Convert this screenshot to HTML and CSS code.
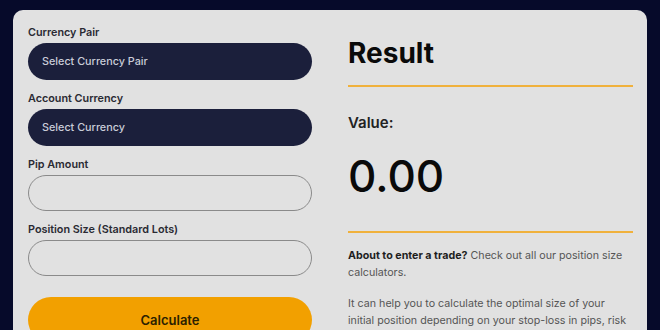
FILE: index.html
```html
<!DOCTYPE html>
<html lang="en">
<head>
<meta charset="utf-8">
<title>Pip Value Calculator</title>
<link rel="stylesheet" href="styles.css">
</head>
<body>
<div class="card">
  <form class="form">
    <div class="field">
      <label class="label">Currency Pair</label>
      <div class="select">Select Currency Pair</div>
    </div>
    <div class="field">
      <label class="label">Account Currency</label>
      <div class="select">Select Currency</div>
    </div>
    <div class="field">
      <label class="label">Pip Amount</label>
      <input class="input" type="text">
    </div>
    <div class="field">
      <label class="label">Position Size (Standard Lots)</label>
      <input class="input" type="text">
    </div>
    <button class="btn" type="button">Calculate</button>
  </form>
  <div class="result">
    <h2 class="title">Result</h2>
    <div class="rule"></div>
    <div class="value-label">Value:</div>
    <div class="value">0.00</div>
    <div class="rule rule-low"></div>
    <p class="text"><strong>About to enter a trade?</strong> Check out all our position size calculators.</p>
    <p class="text">It can help you to calculate the optimal size of your initial position depending on your stop-loss in pips, risk</p>
  </div>
</div>
</body>
</html>
```

FILE: styles.css
```css
* { box-sizing: border-box; }
html, body { margin: 0; padding: 0; }
body {
  background: #060a2a;
  font-family: Inter, "Noto Sans", sans-serif;
  height: 330px;
  overflow: hidden;
}
.card {
  margin: 10px 13px 0 13px;
  width: 634px;
  height: 320px;
  overflow: hidden;
  background: #e1e1e1;
  border-radius: 10px 10px 0 0;
  padding: 16px 14px 0 15px;
  display: grid;
  grid-template-columns: 284px 285px;
  column-gap: 36px;
}
.form { display: flex; flex-direction: column; }
.field { display: flex; flex-direction: column; margin-bottom: 12px; }
.label {
  font-size: 10.8px;
  font-weight: 600;
  color: #2a2a33;
  line-height: 14px;
  margin-bottom: 3px;
}
.select {
  height: 37px;
  border-radius: 19px;
  background: #1b1f3b;
  color: #c9ccd8;
  font-size: 10.8px;
  font-weight: 500;
  display: flex;
  align-items: center;
  padding-left: 14px;
}
.input {
  height: 36px;
  border-radius: 18px;
  border: 1.5px solid #8a8a8a;
  background: #e1e1e1;
  margin: 0;
  width: 100%;
}
.btn {
  margin-top: 9px;
  height: 46px;
  border: none;
  border-radius: 23px;
  background: #f2a000;
  color: #2b2100;
  font-family: Inter, "Noto Sans", sans-serif;
  font-size: 13px;
  font-weight: 600;
  width: 100%;
}
.result { display: flex; flex-direction: column; }
.title {
  margin: 10px 0 0 0;
  font-size: 28px;
  font-weight: 700;
  line-height: 34px;
  color: #0a0a0a;
}
.rule {
  height: 2px;
  background: #f0b13c;
  margin-top: 15px;
}
.value-label {
  margin-top: 27px;
  font-size: 15px;
  font-weight: 600;
  line-height: 18px;
  color: #222;
}
.value {
  margin-top: 18px;
  font-size: 44px;
  font-weight: 500;
  line-height: 52px;
  color: #0a0a0a;
}
.rule-low { margin-top: 29px; }
.text {
  margin: 14px 0 0 0;
  font-size: 10.7px;
  line-height: 17px;
  color: #555;
}
.text + .text { margin-top: 14px; }
.text strong { color: #1e1e1e; font-weight: 700; }
```
